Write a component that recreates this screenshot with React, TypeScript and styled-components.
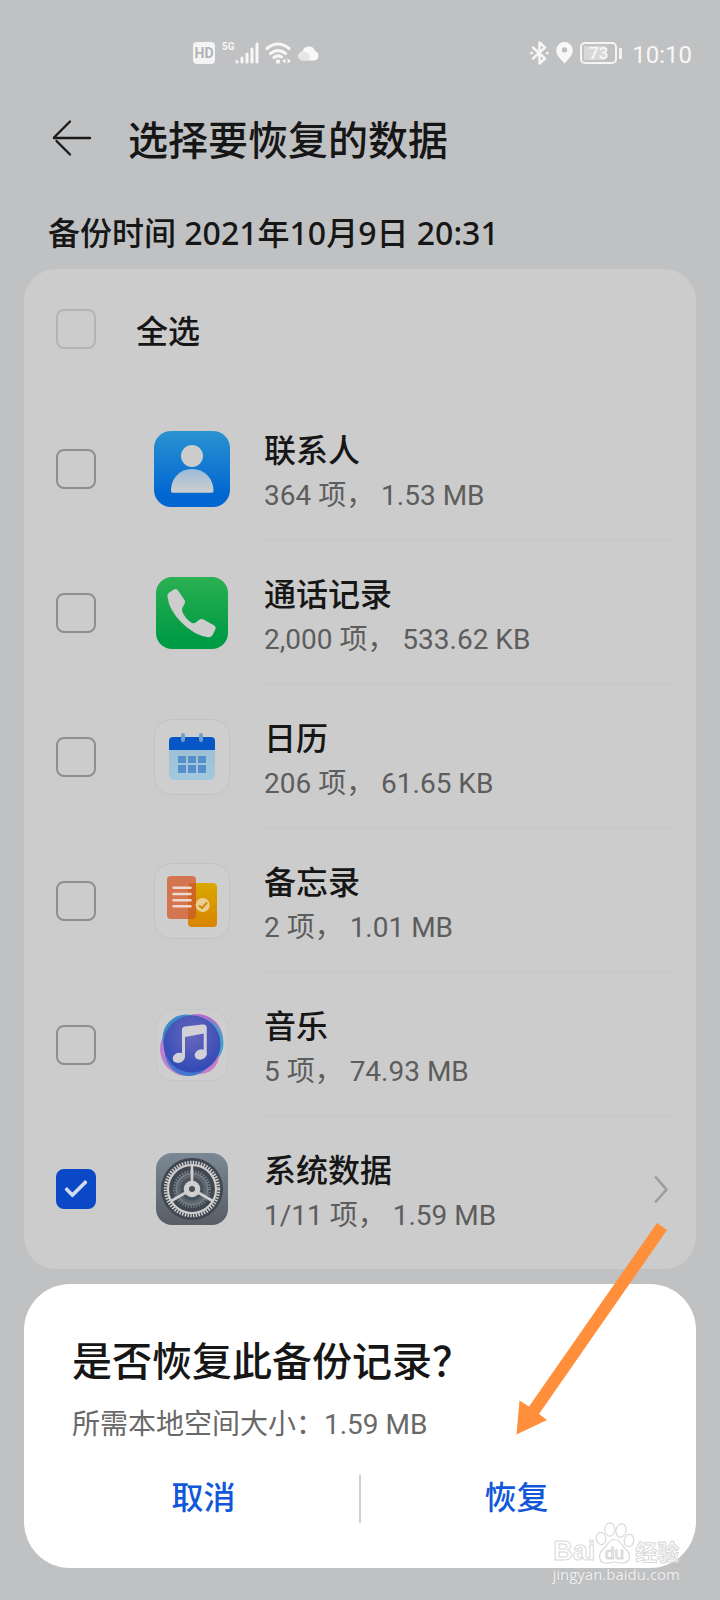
import React, { useState } from "react";
import styled, { createGlobalStyle } from "styled-components";

const GlobalStyle = createGlobalStyle`
  *, *::before, *::after { box-sizing: border-box; }
  body {
    margin: 0;
    background: #c0c1c3;
    color: #161616;
    font-family: "Noto Sans CJK SC", "Noto Sans", sans-serif;
  }
  h1, h2, p, ul { margin: 0; padding: 0; }
  button { border: 0; padding: 0; background: none; font: inherit; color: inherit; cursor: pointer; }
  svg { display: block; flex: none; }
`;

const Page = styled.div`
  position: relative;
  min-height: 100vh;
  padding: 0 24px 32px;
`;

const StatusBar = styled.div`
  display: flex;
  justify-content: space-between;
  align-items: center;
  height: 106px;
  padding: 0 4px 0 169px;
  color: #f7f7f7;
`;

const StatusGroup = styled.div<{ $gap: number }>`
  display: flex;
  align-items: center;
  gap: ${(p) => p.$gap}px;
`;

const HdBadge = styled.span`
  width: 22px;
  height: 22px;
  border-radius: 4px;
  background: #f4f4f4;
  color: #b2b3b5;
  font: 700 14px/22px "Roboto", sans-serif;
  text-align: center;
`;

const Network = styled.span`
  display: flex;
  align-items: flex-start;
  margin-left: 1px;
  font: 700 10px/10px "Roboto", sans-serif;
`;

const Battery = styled.span`
  display: flex;
  align-items: center;
  gap: 2px;

  &::after {
    content: "";
    width: 3px;
    height: 11px;
    border-radius: 1px;
    background: #f4f4f4;
  }
`;

const BatteryBody = styled.span`
  width: 37px;
  height: 22px;
  border: 2px solid #f4f4f4;
  border-radius: 5px;
  background: linear-gradient(90deg, #d8d8d9 73%, transparent 73%) content-box;
  padding: 2px;
  font: 500 17px/15px "Roboto", sans-serif;
  text-align: center;
`;

const Clock = styled.span`
  margin-left: 3px;
  padding-top: 3px;
  font: 400 24px/32px "Roboto", sans-serif;
`;

const Header = styled.header`
  display: flex;
  align-items: center;
  gap: 36px;
  height: 64px;
  padding-left: 28px;
`;

const Title = styled.h1`
  font-size: 40px;
  font-weight: 500;
  line-height: 60px;
`;

const BackupTime = styled.p`
  padding: 43px 24px 16px;
  font-family: "Noto Sans", "Noto Sans CJK SC", sans-serif;
  font-size: 32px;
  font-weight: 500;
  line-height: 40px;
`;

const Card = styled.section`
  padding-bottom: 8px;
  border-radius: 32px;
  background: #cccccc;
`;

const SelectAll = styled.label`
  display: flex;
  align-items: center;
  gap: 40px;
  height: 120px;
  margin-bottom: 8px;
  padding-left: 32px;
  font-size: 32px;
  font-weight: 500;
`;

const CheckBox = styled.input<{ $faint?: boolean }>`
  appearance: none;
  display: grid;
  place-items: center;
  flex: none;
  width: 40px;
  height: 40px;
  margin: 0;
  border: 2px solid ${(p) => (p.$faint ? "#b4b4b4" : "#8e8e8e")};
  border-radius: 8px;

  &:checked {
    border-color: #0a48c8;
    background: #0a48c8;
  }

  &:checked::after {
    content: "";
    width: 22px;
    height: 12px;
    border: solid #d3dcee;
    border-width: 0 0 4px 4px;
    border-radius: 2px;
    transform: translateY(-3px) rotate(-45deg);
  }
`;

const List = styled.ul`
  list-style: none;
`;

const Row = styled.li`
  display: flex;
  align-items: center;
  height: 144px;
  padding: 0 24px 0 32px;

  &:last-child > div { border-bottom: 0; }
`;

const IconSlot = styled.label`
  display: flex;
  justify-content: center;
  flex: none;
  width: 76px;
  margin: 0 34px 0 58px;
`;

const RowBody = styled.div`
  display: flex;
  align-items: center;
  justify-content: space-between;
  flex: 1;
  height: 100%;
  padding-right: 4px;
  border-bottom: 1px solid #c7c7c7;
`;

const RowText = styled.label`
  display: flex;
  flex-direction: column;
  gap: 4px;
  padding-top: 6px;
`;

const RowName = styled.span`
  font-size: 32px;
  font-weight: 500;
  line-height: 44px;
`;

const RowInfo = styled.span`
  color: #5d5d5d;
  font-family: "Roboto", "Noto Sans CJK SC", sans-serif;
  font-size: 28px;
  line-height: 44px;
`;

const Dialog = styled.section`
  position: relative;
  margin-top: 15px;
  padding: 45px 24px 31px;
  border-radius: 46px;
  background: #ffffff;
`;

const DialogTitle = styled.h2`
  padding: 0 24px;
  font-size: 40px;
  font-weight: 500;
  line-height: 60px;
`;

const DialogText = styled.p`
  padding: 14px 24px;
  color: #696969;
  font-family: "Roboto", "Noto Sans CJK SC", sans-serif;
  font-size: 28px;
  line-height: 44px;
`;

const Actions = styled.div`
  display: flex;
  align-items: center;
  height: 76px;
`;

const Action = styled.button`
  flex: 1;
  padding-bottom: 8px;
  color: #1257d8;
  font-size: 32px;
  font-weight: 500;
  line-height: 44px;
`;

const Separator = styled.span`
  width: 2px;
  height: 48px;
  background: #cfcfcf;
`;

const Pointer = styled.svg`
  position: absolute;
  top: -62px;
  right: 28px;
  pointer-events: none;
`;

const Watermark = styled.div`
  position: absolute;
  right: 40px;
  bottom: 16px;
  display: flex;
  flex-direction: column;
  align-items: center;
  pointer-events: none;
`;

const Brand = styled.div`
  display: flex;
  align-items: flex-end;
  color: rgba(255, 255, 255, 0.5);
  font: 700 27px/26px "Liberation Sans", sans-serif;
  -webkit-text-stroke: 1px #d9d9d9;
`;

const BrandCjk = styled.span`
  font: 700 22px/28px "Noto Sans CJK SC", sans-serif;
`;

const Site = styled.span`
  color: #f1f1f1;
  font: 400 15px/20px "Open Sans", sans-serif;
  text-shadow: 0 0 1px #aaaaaa;
`;

const SignalIcon = () => (
  <svg width="24" height="22" viewBox="0 0 24 22" stroke="currentColor" strokeWidth="3" strokeLinecap="round">
    <path d="M2 19.5v.5M7 16v4M12 12v8M17 7v13M22 2v18" />
  </svg>
);

const WifiIcon = () => (
  <svg width="27" height="22" viewBox="0 0 27 22" fill="none" stroke="currentColor" strokeWidth="3" strokeLinecap="round">
    <path d="M2 6.5Q13 -2.5 24 6.5M5.500 11.500Q13 5.500 20.500 11.500M9 15.500Q13 12.500 16.500 15" />
    <circle cx="13" cy="19.500" r="2.200" fill="currentColor" stroke="none" />
    <path d="M20.500 16.500v5l-3.500-2.500zM22.500 16.500v5l3.500-2.500z" fill="currentColor" stroke="none" />
  </svg>
);

const CloudIcon = () => (
  <svg width="22" height="15" viewBox="0 0 22 15">
    <path d="M5 14.500a4.500 4.500 0 0 1-.5-9 6.500 6.500 0 0 1 12.500-.5 5 5 0 0 1 0 9.500z" fill="#f8f8f8" />
    <path d="M5 14.500a4.500 4.500 0 0 1-.5-9q5.500 0 7 4.500 1 3-2.500 4.500z" fill="#e6e6e7" />
  </svg>
);

const BluetoothIcon = () => (
  <svg width="19" height="24" viewBox="0 0 19 24" fill="none" stroke="currentColor" strokeWidth="2.400" strokeLinecap="round" strokeLinejoin="round">
    <path d="M3 6.500L15 17.500 9.500 22.500V1.500L15 6.500 3 17.500" />
    <path d="M1.500 12h.5M17 12h.5" />
  </svg>
);

const PinIcon = () => (
  <svg width="17" height="22" viewBox="0 0 17 22">
    <path fillRule="evenodd" fill="#f8f8f8" d="M8.500 0A8.300 8.300 0 0 0 .200 8.300C.200 14 6 18.500 8.500 21.500 11 18.500 16.800 14 16.800 8.300A8.300 8.300 0 0 0 8.500 0zM8.500 5.200a2.700 2.700 0 1 1 0 5.400 2.700 2.700 0 0 1 0-5.400z" />
  </svg>
);

const BackIcon = () => (
  <svg width="40" height="38" viewBox="0 0 40 38" fill="none" stroke="#1a1a1a" strokeWidth="2.400" strokeLinecap="round" strokeLinejoin="round">
    <path d="M38 19H2M18 2.500L2 18.500M4.500 22L18 35.500" />
  </svg>
);

const ChevronIcon = () => (
  <svg width="14" height="27" viewBox="0 0 14 27" fill="none" stroke="#9c9c9c" strokeWidth="2.600" strokeLinecap="round" strokeLinejoin="round">
    <path d="M2 1.500L12.500 13.500 2 25.500" />
  </svg>
);

const ContactsIcon = () => (
  <svg width="76" height="76" viewBox="0 0 76 76">
    <defs>
      <linearGradient id="contacts-bg" x2="0" y2="1">
        <stop stopColor="#2b92d0" />
        <stop offset=".85" stopColor="#0066d2" />
      </linearGradient>
      <linearGradient id="contacts-body" x2="0" y2="1">
        <stop stopColor="#9dbbd9" />
        <stop offset="1" stopColor="#cecece" />
      </linearGradient>
    </defs>
    <rect width="76" height="76" rx="17" fill="url(#contacts-bg)" />
    <circle cx="38" cy="25" r="11" fill="#cccccc" />
    <path d="M17 60C17 47 26 38 38 38S59.500 47 59.500 60Q59.500 61.700 58 61.700H18.500Q17 61.700 17 60z" fill="url(#contacts-body)" />
  </svg>
);

const PhoneIcon = () => (
  <svg width="72" height="72" viewBox="0 0 72 72">
    <defs>
      <linearGradient id="phone-bg" x2="0" y2="1">
        <stop stopColor="#2bb052" />
        <stop offset=".85" stopColor="#009b45" />
      </linearGradient>
    </defs>
    <rect width="72" height="72" rx="16" fill="url(#phone-bg)" />
    <path fill="#cdcdcd" d="M11.500 20Q11 17 14 15L18.500 12.300Q20.500 11.200 22 13.500L28.500 23Q29.800 25 28.500 27L26.300 31Q25.500 33 26.500 35 29 41 34.500 45 36.500 46.800 39 46L43 43Q45 41.300 47 42.300L58 48.300Q60.500 50 59.500 52L57 57.300Q55.500 60.800 52 60.300 38 58 26 46 13 33 11.500 20z" />
  </svg>
);

const CalendarIcon = () => (
  <svg width="76" height="76" viewBox="0 0 76 76">
    <defs>
      <linearGradient id="calendar-page" x2="0" y2="1">
        <stop stopColor="#9dbcd2" />
        <stop offset="1" stopColor="#a3c9dd" />
      </linearGradient>
    </defs>
    <rect x=".5" y=".5" width="75" height="75" rx="17" fill="#cecece" stroke="#c1c1c4" />
    <rect x="15" y="20" width="46" height="41" rx="5" fill="url(#calendar-page)" />
    <path d="M15 31V22Q15 18 19 18H57Q61 18 61 22V31z" fill="#0656c6" />
    <path d="M29 16v5M47 16v5" stroke="#6f9fcf" strokeWidth="4" strokeLinecap="round" />
    <path d="M24 37h8v7h-8zM34 37h8v7h-8zM44 37h8v7h-8zM24 46h8v8h-8zM34 46h8v8h-8zM44 46h8v8h-8z" fill="#5590cd" />
  </svg>
);

const MemoIcon = () => (
  <svg width="76" height="76" viewBox="0 0 76 76" fill="none">
    <defs>
      <linearGradient id="memo-yellow" x2="0" y2="1">
        <stop stopColor="#d9a900" />
        <stop offset="1" stopColor="#d88400" />
      </linearGradient>
    </defs>
    <rect x=".5" y=".5" width="75" height="75" rx="17" fill="#cecece" stroke="#c1c1c4" />
    <rect x="34" y="20" width="29" height="44" rx="4" fill="url(#memo-yellow)" />
    <rect x="13" y="13" width="29" height="43" rx="4" fill="#d3754f" />
    <path d="M34 24Q34 20 38 20H42V52Q42 56 38 56H34z" fill="#cf6521" />
    <path d="M19.500 24.700h17M19.500 31h17M19.500 37.300h17M19.500 43.300h17" stroke="#efd9cf" strokeWidth="2.500" strokeLinecap="round" />
    <circle cx="48.700" cy="42" r="7" fill="#e9cf95" />
    <path d="M45 42.500L48 45 53 39.500" stroke="#d18d0c" strokeWidth="2.200" />
  </svg>
);

const MusicIcon = () => (
  <svg width="72" height="72" viewBox="0 0 72 72">
    <defs>
      <radialGradient id="music-disc" cx=".5" cy=".35" r=".65">
        <stop stopColor="#6868bd" />
        <stop offset="1" stopColor="#3049b5" />
      </radialGradient>
    </defs>
    <rect x=".5" y=".5" width="71" height="71" rx="16" fill="#cecece" stroke="#c5c5c5" />
    <circle cx="31" cy="40" r="27" fill="#bb7fd0" />
    <circle cx="41" cy="31" r="26" fill="#b16dcb" />
    <circle cx="42.500" cy="34" r="25" fill="#439fcb" />
    <circle cx="30" cy="29" r="23.500" fill="#3d8ac9" />
    <circle cx="44" cy="46" r="19" fill="#c47ccb" />
    <circle cx="33" cy="43" r="24" fill="#4376cc" />
    <circle cx="36" cy="35" r="28.500" fill="url(#music-disc)" />
    <g fill="#d2d2d6">
      <path d="M26 48V21Q26 18 29.500 17.600L46 15.600Q50.700 15 50.700 19V46H47.700V24.500L29 28V48z" />
      <ellipse cx="22.800" cy="48.800" rx="6.200" ry="5" transform="rotate(-20 22.800 48.800)" />
      <ellipse cx="44.700" cy="45.500" rx="6.200" ry="5" transform="rotate(-20 44.700 45.500)" />
    </g>
  </svg>
);

const SettingsIcon = () => (
  <svg width="72" height="72" viewBox="0 0 72 72" fill="none">
    <defs>
      <linearGradient id="settings-bg" x2="0" y2="1">
        <stop stopColor="#7c8896" />
        <stop offset="1" stopColor="#575d65" />
      </linearGradient>
    </defs>
    <rect width="72" height="72" rx="16" fill="url(#settings-bg)" />
    <circle cx="36" cy="36" r="31" fill="#40474f" />
    <circle cx="36" cy="36" r="26.500" stroke="#cfcfcf" strokeWidth="3.500" strokeDasharray="1.500 1.275" />
    <circle cx="36" cy="36" r="24" stroke="#cfcfcf" strokeWidth="2.200" />
    <circle cx="36" cy="36" r="17.500" stroke="#77808a" strokeWidth="3" strokeDasharray="1.300 1.450" />
    <circle cx="36" cy="36" r="15.500" fill="#5d656e" stroke="#77808a" strokeWidth="1.500" />
    <circle cx="36" cy="36" r="11.500" fill="#49515a" />
    <path d="M36 36V12M36 36L15.200 48M36 36L56.800 48" stroke="#cfcfcf" strokeWidth="2.600" />
    <circle cx="36" cy="36" r="8.300" fill="#cfcfcf" />
    <circle cx="36" cy="36" r="3" fill="#4b4f54" />
  </svg>
);

const PawIcon = () => (
  <svg width="40" height="42" viewBox="0 0 40 42" fill="rgba(255,255,255,.5)" stroke="#d9d9d9" strokeWidth="1.200">
    <ellipse cx="6" cy="16.500" rx="4.800" ry="6.200" transform="rotate(-10 6 16.500)" />
    <ellipse cx="14.800" cy="7.500" rx="5" ry="6.700" />
    <ellipse cx="26" cy="8.500" rx="5" ry="6.700" transform="rotate(12 26 8.500)" />
    <ellipse cx="34" cy="18.500" rx="4.800" ry="6.200" transform="rotate(10 34 18.500)" />
    <path d="M19.500 17.500C26 17.500 27 24 31 27.500 36 32 36 40 28.500 41 24 41.500 23 40 19.500 40S14 41.500 10 41C3 40 3.500 31 8 27.500 12.500 24 13 17.500 19.500 17.500z" />
    <text x="19.500" y="37" textAnchor="middle" fontFamily="Liberation Sans, sans-serif" fontSize="17" fontWeight="400">du</text>
  </svg>
);

const entries = [
  { id: "contacts", name: "联系人", info: "364 项， 1.53 MB", Icon: ContactsIcon },
  { id: "calls", name: "通话记录", info: "2,000 项， 533.62 KB", Icon: PhoneIcon },
  { id: "calendar", name: "日历", info: "206 项， 61.65 KB", Icon: CalendarIcon },
  { id: "memo", name: "备忘录", info: "2 项， 1.01 MB", Icon: MemoIcon },
  { id: "music", name: "音乐", info: "5 项， 74.93 MB", Icon: MusicIcon },
  { id: "system", name: "系统数据", info: "1/11 项， 1.59 MB", Icon: SettingsIcon, more: true },
];

export default function App() {
  const [selected, setSelected] = useState<string[]>(["system"]);
  const toggle = (id: string) =>
    setSelected((s) => (s.includes(id) ? s.filter((x) => x !== id) : [...s, id]));
  const all = selected.length === entries.length;

  return (
    <Page>
      <GlobalStyle />
      <StatusBar>
        <StatusGroup $gap={6}>
          <HdBadge>HD</HdBadge>
          <Network>5G<SignalIcon /></Network>
          <WifiIcon />
          <CloudIcon />
        </StatusGroup>
        <StatusGroup $gap={7}>
          <BluetoothIcon />
          <PinIcon />
          <Battery><BatteryBody>73</BatteryBody></Battery>
          <Clock>10:10</Clock>
        </StatusGroup>
      </StatusBar>

      <Header>
        <button type="button" aria-label="返回"><BackIcon /></button>
        <Title>选择要恢复的数据</Title>
      </Header>
      <BackupTime>备份时间 2021年10月9日 20:31</BackupTime>

      <Card>
        <SelectAll>
          <CheckBox
            type="checkbox"
            $faint
            checked={all}
            onChange={() => setSelected(all ? [] : entries.map((e) => e.id))}
          />
          全选
        </SelectAll>
        <List>
          {entries.map(({ id, name, info, Icon, more }) => (
            <Row key={id}>
              <CheckBox type="checkbox" id={id} checked={selected.includes(id)} onChange={() => toggle(id)} />
              <IconSlot htmlFor={id}><Icon /></IconSlot>
              <RowBody>
                <RowText htmlFor={id}>
                  <RowName>{name}</RowName>
                  <RowInfo>{info}</RowInfo>
                </RowText>
                {more && <button type="button" aria-label={name}><ChevronIcon /></button>}
              </RowBody>
            </Row>
          ))}
        </List>
      </Card>

      <Dialog role="dialog" aria-labelledby="restore-title">
        <DialogTitle id="restore-title">是否恢复此备份记录？</DialogTitle>
        <DialogText>所需本地空间大小：1.59 MB</DialogText>
        <Actions>
          <Action type="button">取消</Action>
          <Separator />
          <Action type="button">恢复</Action>
        </Actions>
        <Pointer width="152" height="213" viewBox="0 0 152 213" fill="#ff8f3a">
          <path d="M141 1L151 8 23 192 31 198 .5 212.500 3.500 178.500 13 184.500z" />
        </Pointer>
      </Dialog>

      <Watermark>
        <Brand>
          Bai<PawIcon /><BrandCjk>经验</BrandCjk>
        </Brand>
        <Site>jingyan.baidu.com</Site>
      </Watermark>
    </Page>
  );
}
